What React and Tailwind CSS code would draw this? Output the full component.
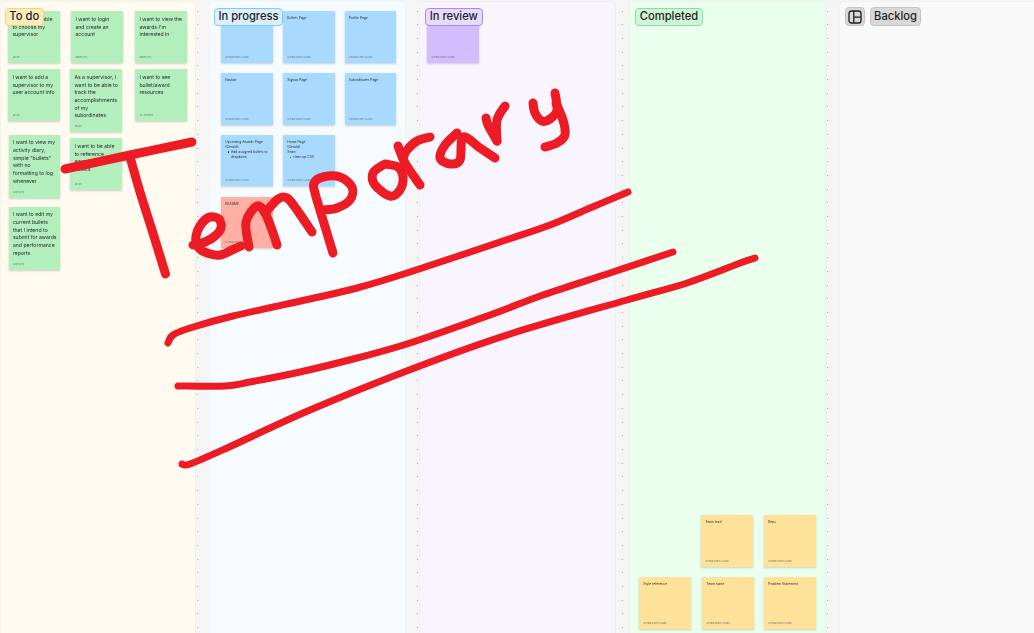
import React from "react";

const font = { fontFamily: "Inter, 'Noto Sans', sans-serif" };

function Sticky({ pos, color, small, foot, lines: textLines, children }) {
  return (
    <div className={`absolute ${pos} ${color} flex flex-col justify-between shadow-[0_1px_2px_rgba(0,0,0,0.18)] ${small ? "pt-[5px] pb-[4px] pl-[4.3px] pr-[3px] text-[3.3px] leading-[5.1px]" : "pt-[4.8px] pb-[3.6px] pl-[4.4px] pr-[0.5px] text-[5.15px] leading-[7.7px] whitespace-nowrap"} text-[#2a2a2a]`}>
      <div className="blur-[0.2px]">
        {textLines ? textLines.map((t, i) => <p key={i}>{t}</p>) : children}
      </div>
      <div className="text-[2.6px] leading-[3px] text-[#6f7a72] blur-[0.2px]">{foot}</div>
    </div>
  );
}

function Bullet({ children }) {
  return (
    <div className="relative pl-[5.7px]">
      <span className="absolute left-[2.6px] top-[1.8px] w-[1.5px] h-[1.5px] rounded-full bg-[#2a2a2a]" />
      {children}
    </div>
  );
}

function Label({ pos, cls, children }) {
  return (
    <div className={`absolute ${pos} h-[18.5px] flex items-center justify-center rounded-[4px] border-[1px] text-[11.2px] font-medium text-[#1e1e1e] whitespace-nowrap ${cls}`}>
      {children}
    </div>
  );
}

function Gutter({ inset }) {
  return (
    <div className={`w-[13px] shrink-0 flex flex-col gap-[12.71px] pt-[9.5px] ${inset}`}>
      {Array.from({ length: 46 }, (_, i) => (
        <span key={i} className="block w-[1px] h-[1px] shrink-0 bg-[#a6a6a6]" />
      ))}
    </div>
  );
}

const sections = "h-[640px] rounded-[4px] relative";
const G = "bg-[#b3efbd]";
const B = "bg-[#a8daff]";
const Y = "bg-[#ffe299]";
const size = "w-[51.5px] h-[51.5px]";

function smooth(p) {
  let d = `M${p[0][0]} ${p[0][1]}`;
  for (let i = 0; i < p.length - 1; i++) {
    const a = p[i - 1] || p[i];
    const b = p[i];
    const c = p[i + 1];
    const e = p[i + 2] || c;
    const c1 = [b[0] + (c[0] - a[0]) / 6, b[1] + (c[1] - a[1]) / 6];
    const c2 = [c[0] - (e[0] - b[0]) / 6, c[1] - (e[1] - b[1]) / 6];
    d += ` C${c1[0]} ${c1[1]} ${c2[0]} ${c2[1]} ${c[0]} ${c[1]}`;
  }
  return d;
}

const letters = [
  [[65, 169], [130, 155], [192, 142]],
  [[130, 157], [140, 192], [152, 230], [165.5, 274]],
  [[193, 245], [205, 242], [215, 236], [221, 228], [219, 219], [210, 217], [202, 223], [196, 236], [198, 247], [207, 253], [220, 255], [232, 250], [241, 246]],
  [[249, 247], [246, 222], [257, 206], [265, 213], [272, 230], [277, 245]],
  [[265, 213], [278, 199], [287, 198], [297, 210], [312, 232]],
  [[333, 253], [323, 220], [315, 193], [314, 183], [323, 177], [340, 177], [352, 187], [350, 200], [337, 208], [323, 210]],
  [[383, 165], [373, 173], [375, 185], [390, 196], [400, 190], [403, 177], [398, 167], [385, 164]],
  [[398, 146], [405, 163], [420, 185]],
  [[403, 158], [407, 150], [417, 141], [430, 137]],
  [[457, 133], [445, 145], [440, 158], [450, 164], [460, 160], [463, 137], [480, 148], [495, 158]],
  [[497, 141], [488, 125], [486, 118]],
  [[497, 141], [497, 120], [505, 106]],
  [[533, 103], [535, 113], [542, 121], [550, 119], [557, 110], [555, 93]],
  [[556, 103], [563, 120], [565, 135], [557, 143], [545, 147]],
];

const lines = [
  [[168, 343], [173, 335], [190, 328], [233, 316], [310, 299], [357, 288], [410, 272], [500, 242], [550, 225], [590, 208], [628, 192]],
  [[178, 386], [225, 386], [250, 382], [300, 372], [357, 358], [410, 343], [490, 315], [543, 295], [610, 273], [673, 252]],
  [[182, 464], [190, 464], [227, 448], [310, 410], [417, 367], [510, 334], [627, 300], [687, 283], [743, 262], [755, 258]],
];

export default function App() {
  return (
    <div style={font} className="relative w-[1034px] h-[633px] overflow-hidden bg-[#f5f5f5]">
      <div className="flex items-start pt-[1px] w-full">
        <section className={`${sections} w-[196px] shrink-0 bg-[#fffbf0] shadow-[inset_0_0_0_1px_#f7f2e4]`}>
          <Sticky pos={`left-[8px] top-[10px] ${size}`} color={G} foot="Jason" lines={["I want to be able", "to choose my", "supervisor"]} />
          <Sticky pos={`left-[71px] top-[10px] ${size}`} color={G} foot="adney710" lines={["I want to login", "and create an", "account"]} />
          <Sticky pos={`left-[135px] top-[10px] ${size}`} color={G} foot="adney710" lines={["I want to view the", "awards I'm", "interested in"]} />
          <Sticky pos={`left-[8px] top-[68px] ${size}`} color={G} foot="Jason" lines={["I want to add a", "supervisor to my", "user account info"]} />
          <Sticky pos="left-[70px] top-[68px] w-[51.5px] h-[63px]" color={G} foot="Jason" lines={["As a supervisor, I", "want to be able to", "track the", "accomplishments", "of my", "subordinates"]} />
          <Sticky pos={`left-[135px] top-[68px] ${size}`} color={G} foot="Tu Thomas" lines={["I want to see", "bullet/award", "resources"]} />
          <Sticky pos="left-[8.5px] top-[133.5px] w-[51.5px] h-[63px]" color={G} foot="sooxyz18" lines={["I want to view my", "activity diary,", "simple \"bullets\"", "with no", "formatting to log", "whenever"]} />
          <Sticky pos={`left-[70px] top-[137px] ${size}`} color={G} foot="Jason" lines={["I want to be able", "to reference", "awards in my", "bullets"]} />
          <Sticky pos="left-[8.5px] top-[205.5px] w-[51.5px] h-[63px]" color={G} foot="sooxyz18" lines={["I want to edit my", "current bullets", "that I intend to", "submit for awards", "and performance", "reports"]} />
          <Label pos="left-[4.5px] top-[6.5px] w-[39.5px]" cls="bg-[#ffecbd] border-[#ffcd7a]">To do</Label>
        </section>

        <Gutter inset="pl-[1px]" />

        <section className={`${sections} w-[197px] shrink-0 bg-[#f5fbff] shadow-[inset_0_0_0_1px_#eef5fa]`}>
          <Sticky small pos={`left-[12px] top-[10px] ${size}`} color={B} foot="Gerald Dann Susan"><p>&nbsp;</p></Sticky>
          <Sticky small pos={`left-[74px] top-[10px] ${size}`} color={B} foot="Gerald Dann Susan"><p>Bullets Page</p></Sticky>
          <Sticky small pos={`left-[135.5px] top-[10px] ${size}`} color={B} foot="Gerald Dann Susan"><p>Profile Page</p></Sticky>
          <Sticky small pos={`left-[12px] top-[72px] ${size}`} color={B} foot="Gerald Dann Susan"><p>Navbar</p></Sticky>
          <Sticky small pos={`left-[74px] top-[72px] ${size}`} color={B} foot="Gerald Dann Susan"><p>Signup Page</p></Sticky>
          <Sticky small pos={`left-[135.5px] top-[72px] ${size}`} color={B} foot="Gerald Dann Susan"><p>Subordinates Page</p></Sticky>
          <Sticky small pos={`left-[12px] top-[133.5px] ${size}`} color={B} foot="Gerald Dann Susan">
            <p>Upcoming Awards Page</p>
            <p>(Gerald):</p>
            <Bullet>Add assigned bullets to dropdown</Bullet>
          </Sticky>
          <Sticky small pos={`left-[74px] top-[133.5px] ${size}`} color={B} foot="Gerald Dann Susan">
            <p>Home Page</p>
            <p>(Gerald)</p>
            <p>Sean:</p>
            <Bullet>clean up CSS</Bullet>
          </Sticky>
          <Sticky small pos={`left-[12px] top-[195.5px] ${size}`} color="bg-[#ffafa3]" foot="Gerald Dann Susan"><p>README</p></Sticky>
          <Label pos="left-[5px] top-[6.5px] w-[69px]" cls="bg-[#dceffd] border-[#80caff]">In progress</Label>
        </section>

        <Gutter inset="pl-[10.5px]" />

        <section className={`${sections} w-[197px] shrink-0 bg-[#f8f5ff] shadow-[inset_0_0_0_1px_#f0edf8]`}>
          <Sticky small pos={`left-[8px] top-[10px] ${size}`} color="bg-[#d3bdff]" foot="Gerald Dann Susan"><p>&nbsp;</p></Sticky>
          <Label pos="left-[6px] top-[6.5px] w-[57.5px]" cls="bg-[#e6dcff] border-[#af83ff]">In review</Label>
        </section>

        <Gutter inset="pl-[6px]" />

        <section className={`${sections} w-[197px] shrink-0 bg-[#ebffee] shadow-[inset_0_0_0_1px_#e5f8e8]`}>
          <Sticky small pos={`left-[72px] top-[514px] ${size}`} color={Y} foot="Gerald Dann Susan"><p>Team lead</p></Sticky>
          <Sticky small pos={`left-[135px] top-[514px] ${size}`} color={Y} foot="Gerald Dann Susan"><p>Reps</p></Sticky>
          <Sticky small pos={`left-[10px] top-[576px] ${size}`} color={Y} foot="Gerald Dann Susan"><p>Style reference</p></Sticky>
          <Sticky small pos={`left-[73px] top-[576px] ${size}`} color={Y} foot="Gerald Dann Susan"><p>Team name</p></Sticky>
          <Sticky small pos={`left-[135px] top-[576px] ${size}`} color={Y} foot="Gerald Dann Susan"><p>Problem Statement</p></Sticky>
          <Label pos="left-[6px] top-[6.5px] w-[68px]" cls="bg-[#cff5d6] border-[#85e0a3]">Completed</Label>
        </section>

        <Gutter inset="pl-[1px]" />

        <section className={`${sections} flex-1 bg-[#f9f9f9] shadow-[inset_1px_1px_0_0_#f1f1f1]`}>
          <div className="absolute left-[6px] top-[6px] w-[20px] h-[19px] flex items-center justify-center rounded-[4px] border border-[#c4c4c4] bg-[#d9d9d9]">
            <svg width="14" height="14" viewBox="0 0 14 14" fill="none" stroke="#1e1e1e" strokeWidth="1.3">
              <rect x="1" y="1" width="12" height="12" rx="2.6" />
              <path d="M5.8 1V13M5.8 7.2H13" />
            </svg>
          </div>
          <Label pos="left-[31px] top-[6px] w-[51px]" cls="bg-[#d9d9d9] border-[#c4c4c4]">Backlog</Label>
        </section>
      </div>

      <svg className="absolute left-0 top-0 pointer-events-none" width="1034" height="633" fill="none" stroke="#ed1c24" strokeLinecap="round" strokeLinejoin="round">
        {letters.map((p, i) => <path key={i} d={smooth(p)} strokeWidth="9" />)}
        {lines.map((p, i) => <path key={i} d={smooth(p)} strokeWidth="7" />)}
      </svg>
    </div>
  );
}
